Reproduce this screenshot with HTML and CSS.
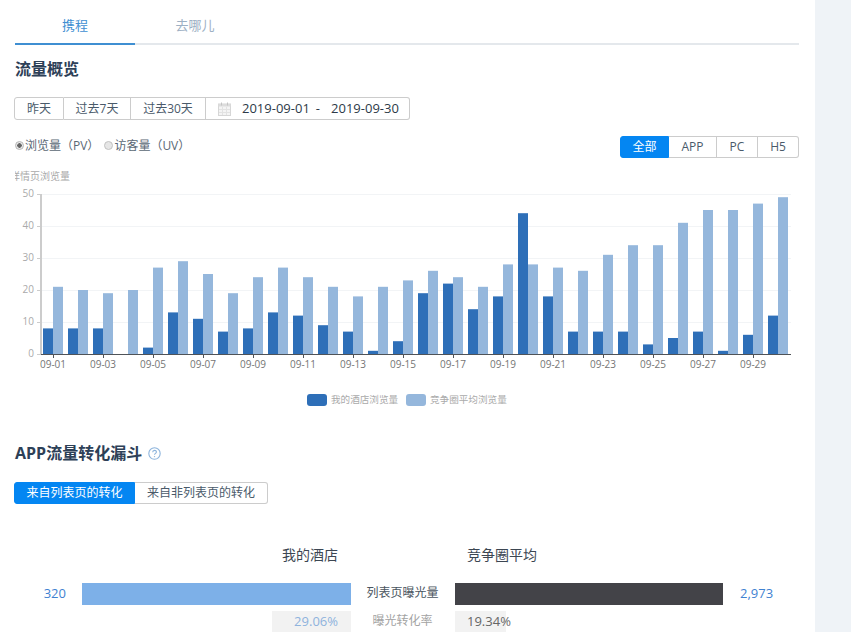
FILE: index.html
```html
<!DOCTYPE html>
<html lang="zh-CN">
<head>
<meta charset="utf-8">
<title>流量概览</title>
<link rel="stylesheet" href="styles.css">
</head>
<body>
<main class="page">
  <nav class="tabs">
    <a class="tab tab-active">携程</a>
    <a class="tab">去哪儿</a>
  </nav>
  <h2 class="title">流量概览</h2>
  <div class="btn-group date-group">
    <span class="btn w50">昨天</span>
    <span class="btn w67">过去7天</span>
    <span class="btn w75">过去30天</span>
    <span class="btn date-range">
      <svg class="cal" width="13" height="14" viewBox="0 0 13 14">
        <rect x="0.5" y="2" width="12" height="11.5" fill="#f4f4f4" stroke="#d6d6d6"/>
        <rect x="0.5" y="2" width="12" height="2.5" fill="#dcdcdc"/>
        <path d="M3.5 0.5v3M9.5 0.5v3" stroke="#c4c4c4"/>
        <path d="M1 7.5h11M1 10.5h11M4.5 5v8M8.5 5v8" stroke="#e2e2e2"/>
      </svg>
      <span>2019-09-01</span><span class="date-sep">-</span><span>2019-09-30</span>
    </span>
  </div>
  <div class="filter-row">
    <div class="radios">
      <span class="radio radio-on"></span><span class="radio-text first">浏览量（PV）</span>
      <span class="radio"></span><span class="radio-text">访客量（UV）</span>
    </div>
    <div class="btn-group platform-group">
      <span class="btn btn-on w49">全部</span>
      <span class="btn w48">APP</span>
      <span class="btn w41">PC</span>
      <span class="btn w41">H5</span>
    </div>
  </div>
  <div class="axis-name"><span>详情页浏览量</span></div>
  <svg class="chart" width="784" height="238" viewBox="15 180 784 238">
    <g stroke="#f2f4f6" stroke-width="1">
      <path d="M41 194.5H791M41 226.5H791M41 258.5H791M41 290.5H791M41 322.5H791"/>
    </g>
    <g transform="translate(43,354) scale(1,-3.2)" class="dark">
      <rect x="0" width="10" height="8"/><rect x="25" width="10" height="8"/><rect x="50" width="10" height="8"/>
      <rect x="100" width="10" height="2"/><rect x="125" width="10" height="13"/><rect x="150" width="10" height="11"/>
      <rect x="175" width="10" height="7"/><rect x="200" width="10" height="8"/><rect x="225" width="10" height="13"/>
      <rect x="250" width="10" height="12"/><rect x="275" width="10" height="9"/><rect x="300" width="10" height="7"/>
      <rect x="325" width="10" height="1"/><rect x="350" width="10" height="4"/><rect x="375" width="10" height="19"/>
      <rect x="400" width="10" height="22"/><rect x="425" width="10" height="14"/><rect x="450" width="10" height="18"/>
      <rect x="475" width="10" height="44"/><rect x="500" width="10" height="18"/><rect x="525" width="10" height="7"/>
      <rect x="550" width="10" height="7"/><rect x="575" width="10" height="7"/><rect x="600" width="10" height="3"/>
      <rect x="625" width="10" height="5"/><rect x="650" width="10" height="7"/><rect x="675" width="10" height="1"/>
      <rect x="700" width="10" height="6"/><rect x="725" width="10" height="12"/>
    </g>
    <g transform="translate(53,354) scale(1,-3.2)" class="light">
      <rect x="0" width="10" height="21"/><rect x="25" width="10" height="20"/><rect x="50" width="10" height="19"/>
      <rect x="75" width="10" height="20"/><rect x="100" width="10" height="27"/><rect x="125" width="10" height="29"/>
      <rect x="150" width="10" height="25"/><rect x="175" width="10" height="19"/><rect x="200" width="10" height="24"/>
      <rect x="225" width="10" height="27"/><rect x="250" width="10" height="24"/><rect x="275" width="10" height="21"/>
      <rect x="300" width="10" height="18"/><rect x="325" width="10" height="21"/><rect x="350" width="10" height="23"/>
      <rect x="375" width="10" height="26"/><rect x="400" width="10" height="24"/><rect x="425" width="10" height="21"/>
      <rect x="450" width="10" height="28"/><rect x="475" width="10" height="28"/><rect x="500" width="10" height="27"/>
      <rect x="525" width="10" height="26"/><rect x="550" width="10" height="31"/><rect x="575" width="10" height="34"/>
      <rect x="600" width="10" height="34"/><rect x="625" width="10" height="41"/><rect x="650" width="10" height="45"/>
      <rect x="675" width="10" height="45"/><rect x="700" width="10" height="47"/><rect x="725" width="10" height="49"/>
    </g>
    <path d="M41 194v160" stroke="#ccc" stroke-width="2" fill="none"/>
    <path d="M37 194.5h4M37 226.5h4M37 258.5h4M37 290.5h4M37 322.5h4M37 354.5h4" stroke="#ccc" fill="none"/>
    <path d="M41 354.5H791" stroke="#4f5358" fill="none"/>
    <path d="M53.5 354v4M103.5 354v4M153.5 354v4M203.5 354v4M253.5 354v4M303.5 354v4M353.5 354v4M403.5 354v4M453.5 354v4M503.5 354v4M553.5 354v4M603.5 354v4M653.5 354v4M703.5 354v4M753.5 354v4" stroke="#4f5358" fill="none"/>
    <g class="y-tick">
      <text x="34" y="197">50</text><text x="34" y="229">40</text><text x="34" y="261">30</text>
      <text x="34" y="293">20</text><text x="34" y="325">10</text><text x="34" y="357">0</text>
    </g>
    <g class="x-tick">
      <text x="53" y="368">09-01</text><text x="103" y="368">09-03</text><text x="153" y="368">09-05</text>
      <text x="203" y="368">09-07</text><text x="253" y="368">09-09</text><text x="303" y="368">09-11</text>
      <text x="353" y="368">09-13</text><text x="403" y="368">09-15</text><text x="453" y="368">09-17</text>
      <text x="503" y="368">09-19</text><text x="553" y="368">09-21</text><text x="603" y="368">09-23</text>
      <text x="653" y="368">09-25</text><text x="703" y="368">09-27</text><text x="753" y="368">09-29</text>
    </g>
    <rect x="307" y="394" width="20" height="12" rx="3" class="legend-dark"/>
    <text x="331" y="403" class="legend">我的酒店浏览量</text>
    <rect x="406" y="394" width="20" height="12" rx="3" class="legend-light"/>
    <text x="430" y="403" class="legend">竞争圈平均浏览量</text>
  </svg>
  <div class="section-head">
    <h2 class="title">APP流量转化漏斗</h2>
    <svg class="help" width="13" height="13" viewBox="0 0 13 13">
      <circle cx="6.5" cy="6.5" r="5.7" fill="none" stroke="#8db4dc" stroke-width="1.1"/>
      <path d="M4.7 5.2c0-2.4 3.7-2.4 3.7-.2 0 1.4-1.9 1.4-1.9 2.8" fill="none" stroke="#8db4dc" stroke-width="1.1"/>
      <circle cx="6.5" cy="9.6" r=".7" fill="#8db4dc"/>
    </svg>
  </div>
  <div class="btn-group source-group">
    <span class="btn btn-on w121">来自列表页的转化</span>
    <span class="btn w133">来自非列表页的转化</span>
  </div>
  <div class="funnel">
    <div class="f-head f-left">我的酒店</div>
    <div class="f-head f-right">竞争圈平均</div>
    <div class="f-num f-num-left">320</div>
    <div class="f-bar bar-mine"></div>
    <div class="f-label">列表页曝光量</div>
    <div class="f-bar bar-rival"></div>
    <div class="f-num">2,973</div>
    <div class="rate-cell rate-left"><span class="rate rate-mine">29.06%</span></div>
    <div class="f-label f-label-sub">曝光转化率</div>
    <div class="rate-cell"><span class="rate rate-rival">19.34%</span></div>
  </div>
</main>
<aside class="side"></aside>
</body>
</html>
```
FILE: styles.css
```css
* { box-sizing: border-box; }
html, body { margin: 0; height: 632px; overflow: hidden; }
body {
  display: flex;
  background: #fff;
  font-family: "Open Sans", "Noto Sans CJK SC", sans-serif;
  font-size: 12px;
  color: #4a5a6a;
}
.page { width: 815px; padding: 0 16px 0 15px; flex: none; }
.side { flex: 1; background: #eff3f7; }

.tabs { display: flex; height: 45px; border-bottom: 2px solid #e4e8ec; }
.tab { width: 120px; height: 45px; line-height: 50px; text-align: center; font-size: 13px; color: #9db0c4; border-bottom: 2px solid transparent; }
.tab-active { color: #3f8fd2; border-bottom-color: #3f8fd2; }

.title { margin: 0; font-size: 16px; line-height: 22px; font-weight: 700; color: #2d4057; }
.page > .title { margin-top: 13px; }

.btn-group { display: flex; width: fit-content; height: 23px; margin-left: -1px; }
.btn { display: flex; align-items: center; justify-content: center; border: 1px solid #ccc; border-left: 0; line-height: 1; white-space: nowrap; }
.btn:first-child { border-left: 1px solid #ccc; border-radius: 3px 0 0 3px; }
.btn:last-child { border-radius: 0 3px 3px 0; }
.btn-on, .btn-on:first-child { background: #0486f2; border-color: #0486f2; color: #fff; }
.w41 { width: 41px; }
.w48 { width: 48px; }
.w49 { width: 49px; }
.w50 { width: 50px; }
.w67 { width: 67px; }
.w75 { width: 75px; }
.w121 { width: 121px; }
.w133 { width: 133px; }
.date-group { margin-top: 17px; }
.date-range { width: 204px; justify-content: flex-start; padding-left: 12px; font-size: 13px; color: #2d3a48; }
.cal { margin-right: 11px; flex: none; }
.date-sep { margin: 0 11px 0 6px; }

.filter-row { display: flex; justify-content: space-between; align-items: flex-start; margin-top: 16px; height: 22px; }
.radios { display: flex; align-items: center; height: 18px; color: #5b6875; }
.radio { width: 9px; height: 9px; border-radius: 50%; background: #e6e6e6; border: 1px solid #c2c2c2; }
.radio-on { background: radial-gradient(circle, #666 0 2px, #e9e9e9 2.5px); border-color: #b5b5b5; }
.radio-text { margin-left: 1px; }
.radio-text.first { margin-right: 5px; }
.platform-group { height: 22px; margin-left: 0; }

.axis-name { width: 55px; height: 14px; margin-top: 11px; overflow: hidden; white-space: nowrap; font-size: 10px; line-height: 14px; color: #aaa; }
.axis-name span { display: block; margin-left: -5px; }

.chart { display: block; margin-top: -3px; }
.dark rect, .legend-dark { fill: #2e6fb8; }
.light rect, .legend-light { fill: #95b7dc; }
.y-tick text { font-size: 10px; text-anchor: end; fill: #aaa; }
.x-tick text { font-size: 10px; text-anchor: middle; fill: #757575; }
.legend { font-size: 9.6px; fill: #aaa; }

.section-head { display: flex; align-items: center; margin-top: 24px; height: 22px; }
.help { margin-left: 6px; }
.source-group { margin-top: 18px; height: 22px; }

.funnel {
  display: grid;
  grid-template-columns: 51px 16px 269px 104px 268px 17px auto;
  grid-template-rows: 32px 22px 21px;
  row-gap: 6px;
  margin-top: 41px;
}
.f-head { font-size: 14px; line-height: 20px; color: #3c4652; }
.f-left { grid-column: 3; justify-self: end; margin-right: 13px; }
.f-right { grid-column: 5 / 8; margin-left: 12px; }
.f-num { font-size: 13px; line-height: 20px; color: #3f82d1; grid-column: 7; }
.f-num-left { grid-column: 1; text-align: right; }
.f-bar { height: 22px; }
.bar-mine { grid-column: 3; background: #7db0e8; }
.bar-rival { grid-column: 5; background: #434348; }
.f-label { grid-column: 4; padding-right: 1px; text-align: center; line-height: 20px; color: #4a5560; }
.f-label-sub { color: #a3a3a3; }
.rate-cell { display: flex; }
.rate-left { grid-column: 3; justify-content: flex-end; }
.rate { background: #f2f2f2; font-size: 13px; line-height: 21px; height: 21px; }
.rate-mine { width: 79px; color: #8fb3dd; text-align: right; padding-right: 13px; }
.rate-rival { width: 51px; color: #666; padding-left: 12px; white-space: nowrap; }
```
